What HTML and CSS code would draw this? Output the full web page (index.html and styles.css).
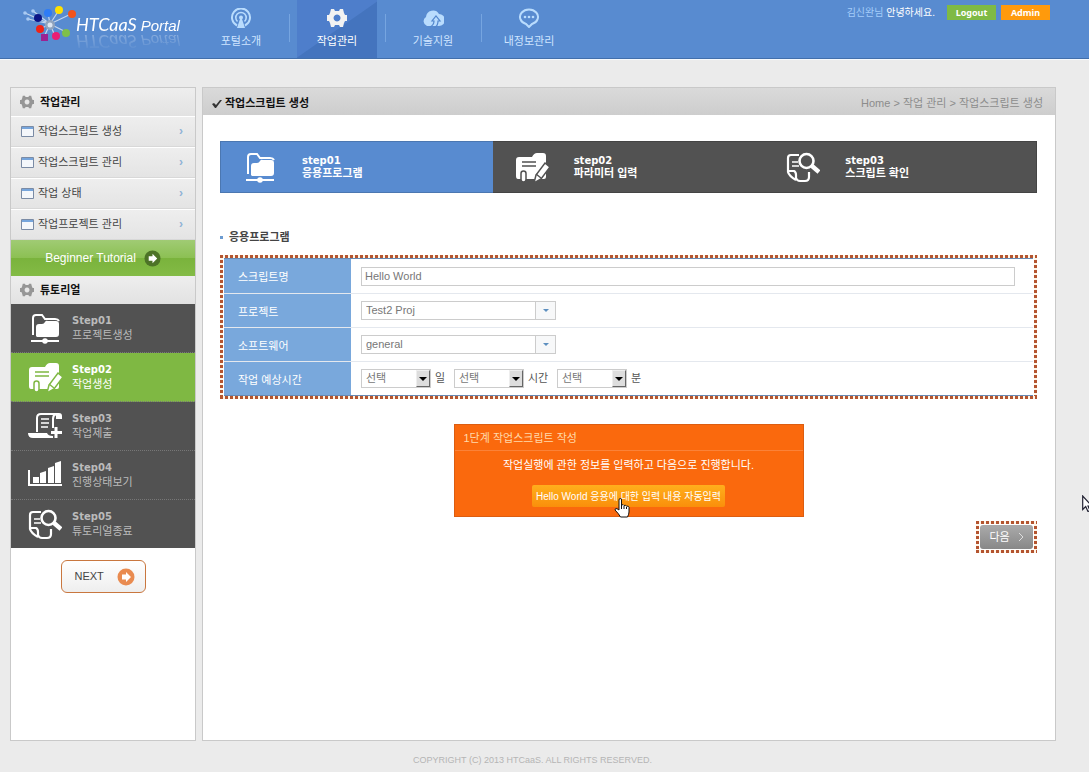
FILE: index.html
```html
<!DOCTYPE html>
<html lang="ko">
<head>
<meta charset="utf-8">
<title>HTCaaS Portal</title>
<link rel="stylesheet" href="styles.css">
</head>
<body>
<svg class="defs" aria-hidden="true">
  <symbol id="i-folder" viewBox="0 0 32 32">
    <path d="M4 23V6q0-3 3-3h6l3 4h10q3 0 4 2" fill="none" stroke="currentColor" stroke-width="2"/>
    <path d="M7 24V15q0-3 3-3h3q2 0 3-2t3-1h8q3 0 3 3v10q0 3-3 3H8z" fill="currentColor"/>
    <path d="M2 29h28" stroke="currentColor" stroke-width="2"/>
    <circle cx="16" cy="29" r="2.800" fill="currentColor"/>
  </symbol>
  <symbol id="i-write" viewBox="0 0 34 32">
    <path d="M1 25V9q0-3 3-3h13q2-4 5-4h6q3 0 3 3v21q0 2-2 2H3q-2 0-2-3z" fill="currentColor"/>
    <path d="M7 11h14M7 15h14" class="cut" stroke-width="1.500"/>
    <rect x="6" y="20" width="5" height="11" rx="2.500" fill="currentColor" class="cut" stroke-width="1.500"/>
    <path d="M19 32l2-8 9-12 5 4-9 12z" fill="currentColor" class="cut" stroke-width="1.500"/>
    <path d="M21 23l5 4" class="cut" stroke-width="1.500"/>
  </symbol>
  <symbol id="i-submit" viewBox="0 0 34 32">
    <path d="M9 22V8q0-4 4-4h15q-3 1-3 5v9" fill="none" stroke="currentColor" stroke-width="2"/>
    <path d="M26 3h5q3 0 3 3v3h-6V5zM0 23h19q1 3 6 3v2H5q-5 0-5-5z" fill="currentColor"/>
    <path d="M13 9h8M13 13h8M13 17h7" stroke="currentColor" stroke-width="1.500"/>
    <path d="M28 17v11M23 22.500h11" stroke="currentColor" stroke-width="3"/>
  </symbol>
  <symbol id="i-chart" viewBox="0 0 34 32">
    <path d="M1 11v15h33" fill="none" stroke="currentColor" stroke-width="2"/>
    <path d="M5 18h6v6H5zM12 14l6-2v12h-6zM20 9l6-2v17h-6zM27 4l6-2v22h-6z" fill="currentColor"/>
  </symbol>
  <symbol id="i-search" viewBox="0 0 34 32">
    <path d="M13 4H5Q2 4 2 7v14q1 4 8 8M2 20h6q2 1 2 4v3q1 3 4 3h5q4 0 4-4v-5" fill="none" stroke="currentColor" stroke-width="2.200"/>
    <path d="M6 11h6M6 15h7" stroke="currentColor" stroke-width="1.500"/>
    <circle cx="20.500" cy="10" r="7" fill="none" stroke="currentColor" stroke-width="2.600"/>
    <path d="M26 15l7 6" stroke="currentColor" stroke-width="4.500"/>
  </symbol>
  <symbol id="i-gear" viewBox="0 0 20 20">
    <path fill-rule="evenodd" fill="currentColor" d="M4 1h3l1 2h4l1-2h3l1 4 1 2h2v6h-2l-1 2-1 4h-3l-1-2H8l-1 2H4l-1-4-1-2H0V7h2l1-2zM10 6.500a3.500 3.500 0 1 0 .1 0z"/>
  </symbol>
  <symbol id="i-arrow" viewBox="0 0 18 18">
    <circle cx="9" cy="9" r="8.500" fill="currentColor"/>
    <path d="M5 6.500h4V4l5 5-5 5v-2.500H5z" fill="#fff"/>
  </symbol>
  <symbol id="i-window" viewBox="0 0 13 11">
    <path d="M.5.500h12v10H.5z" fill="#f4f7fb" stroke="#7a8ba5"/>
    <path d="M1 1h11v2H1z" fill="#76a5dc"/>
  </symbol>
</svg>

<header class="top">
  <a class="logo" href="#" aria-label="HTCaaS Portal">
    <svg class="logo-mark" viewBox="0 0 56 40" aria-hidden="true">
      <g stroke="#c4d6ee" stroke-width="1.200">
        <path d="M28 21L3 10M28 21L11 8M28 21L6 16M28 21L26 10M28 21L37 7M28 21L49 11M28 21L44 29M28 21L33 33M28 21L22 34M28 21L18 26"/>
      </g>
      <circle cx="28" cy="22" r="5" fill="#90a3bd"/><circle cx="28" cy="22" r="2.500" fill="#dde6f2"/>
      <circle cx="3" cy="10" r="1.800" fill="#a9caf3"/><circle cx="11" cy="8" r="1.800" fill="#a9caf3"/><circle cx="6" cy="16" r="1.800" fill="#a9caf3"/>
      <circle cx="16" cy="15" r="4" fill="#0b1586"/><circle cx="26" cy="10" r="4" fill="#2e7cf6"/>
      <circle cx="37" cy="7" r="4" fill="#ffe100"/><circle cx="50" cy="11" r="4" fill="#f1531c"/>
      <circle cx="44" cy="30" r="4" fill="#7fc04b"/><circle cx="34" cy="33" r="4" fill="#e91e73"/>
      <circle cx="18" cy="26" r="4" fill="#f02315"/><path d="M19 31h7v7h-7z" fill="#9c2292"/>
    </svg>
    <span class="logo-text"><span class="logo-name">HTCaaS</span><span class="logo-sub">Portal</span></span>
  </a>
  <nav class="menu">
    <a href="#"><svg viewBox="0 0 20 20" aria-hidden="true"><g fill="none" stroke="currentColor"><path d="M6 17.500a9 9 0 1 1 8 0" stroke-width="2"/><path d="M6.500 13.500a5.200 5.200 0 1 1 7 0" stroke-width="1.600"/></g><circle cx="10" cy="9.500" r="2" fill="currentColor"/><path d="M9 11h2l3 9H6z" fill="currentColor"/></svg><span>포털소개</span></a>
    <a class="on" href="#"><svg aria-hidden="true"><use href="#i-gear"/></svg><span>작업관리</span></a>
    <a href="#"><svg viewBox="0 0 22 20" aria-hidden="true"><path d="M5 18a5 5 0 0 1-1-9 7 7 0 0 1 13-3 6 6 0 0 1 0 12z" fill="currentColor"/><path d="M8 19q4-2 4-6h-2l4-5 4 5h-2q0 5-4 7" fill="none" stroke="#5387cd" stroke-width="1.200"/></svg><span>기술지원</span></a>
    <a href="#"><svg viewBox="0 0 20 20" aria-hidden="true"><path d="M7 16a9 7.500 0 1 1 6 0l-3 3z" fill="none" stroke="currentColor" stroke-width="2"/><g fill="currentColor"><circle cx="6" cy="9" r="1.300"/><circle cx="10" cy="9" r="1.300"/><circle cx="14" cy="9" r="1.300"/></g></svg><span>내정보관리</span></a>
  </nav>
  <div class="user">
    <span class="hello"><span class="who">김신완님</span> 안녕하세요.</span>
    <button class="pill green" type="button">Logout</button>
    <button class="pill amber" type="button">Admin</button>
  </div>
</header>

<div class="layout">
  <aside class="side">
    <h2 class="side-head"><svg aria-hidden="true"><use href="#i-gear"/></svg>작업관리</h2>
    <nav class="side-nav">
      <a href="#"><svg aria-hidden="true"><use href="#i-window"/></svg><span>작업스크립트 생성</span><b>›</b></a>
      <a href="#"><svg aria-hidden="true"><use href="#i-window"/></svg><span>작업스크립트 관리</span><b>›</b></a>
      <a href="#"><svg aria-hidden="true"><use href="#i-window"/></svg><span>작업 상태</span><b>›</b></a>
      <a href="#"><svg aria-hidden="true"><use href="#i-window"/></svg><span>작업프로젝트 관리</span><b>›</b></a>
    </nav>
    <a class="beginner" href="#">Beginner Tutorial<svg aria-hidden="true"><use href="#i-arrow"/></svg></a>
    <h2 class="side-head"><svg aria-hidden="true"><use href="#i-gear"/></svg>튜토리얼</h2>
    <nav class="tutorial">
      <a href="#"><svg aria-hidden="true"><use href="#i-folder"/></svg><span><b>Step01</b>프로젝트생성</span></a>
      <a class="on" href="#"><svg aria-hidden="true"><use href="#i-write"/></svg><span><b>Step02</b>작업생성</span></a>
      <a href="#"><svg aria-hidden="true"><use href="#i-submit"/></svg><span><b>Step03</b>작업제출</span></a>
      <a href="#"><svg aria-hidden="true"><use href="#i-chart"/></svg><span><b>Step04</b>진행상태보기</span></a>
      <a href="#"><svg aria-hidden="true"><use href="#i-search"/></svg><span><b>Step05</b>튜토리얼종료</span></a>
    </nav>
    <button class="next" type="button">NEXT<svg aria-hidden="true"><use href="#i-arrow"/></svg></button>
  </aside>

  <main class="main">
    <div class="main-head">
      <h1><svg viewBox="0 0 10 10" aria-hidden="true"><path d="M0 5l2-1 2 2 4-5h2L4 9H3z" fill="#333"/></svg>작업스크립트 생성</h1>
      <p class="crumbs">Home &gt; 작업 관리 &gt; 작업스크립트 생성</p>
    </div>
    <div class="content">
      <ol class="steps">
        <li class="on"><svg aria-hidden="true"><use href="#i-folder"/></svg><span><b>step01</b>응용프로그램</span></li>
        <li><svg aria-hidden="true"><use href="#i-write"/></svg><span><b>step02</b>파라미터 입력</span></li>
        <li><svg aria-hidden="true"><use href="#i-search"/></svg><span><b>step03</b>스크립트 확인</span></li>
      </ol>
      <h2 class="section">응용프로그램</h2>
      <form class="dotted form">
        <div class="rows">
          <div class="row"><label for="name">스크립트명</label><div class="field"><input id="name" type="text" value="Hello World"></div></div>
          <div class="row"><label for="proj">프로젝트</label><div class="field"><span class="combo"><select id="proj"><option>Test2 Proj</option></select><i></i></span></div></div>
          <div class="row"><label for="soft">소프트웨어</label><div class="field"><span class="combo"><select id="soft"><option>general</option></select><i></i></span></div></div>
          <div class="row"><label for="day">작업 예상시간</label><div class="field times">
            <span class="combo classic"><select id="day"><option>선택</option></select><i></i></span><label for="day">일</label>
            <span class="combo classic"><select id="hour"><option>선택</option></select><i></i></span><label for="hour">시간</label>
            <span class="combo classic"><select id="min"><option>선택</option></select><i></i></span><label for="min">분</label>
          </div></div>
        </div>
      </form>
      <section class="guide">
        <h3>1단계 작업스크립트 작성</h3>
        <p>작업실행에 관한 정보를 입력하고 다음으로 진행합니다.</p>
        <button type="button">Hello World 응용에 대한 입력 내용 자동입력</button>
        <svg class="hand" viewBox="0 0 16 20" aria-hidden="true"><path d="M5 12V2q0-1.500 1.300-1.500T7.500 2v5q2-1 2.500.500 2-.8 2.500.700 2-.5 2.500 1V14q0 2-1.500 5h-7Q5 16 1 12q0-2 2-1.300z" fill="#fff" stroke="#111"/><path d="M7.500 7v4M10 8v3M12.500 9v2" stroke="#111" fill="none"/></svg>
      </section>
      <div class="dotted go"><button type="button">다음<svg viewBox="0 0 6 10" aria-hidden="true"><path d="M1 1l4 4-4 4" fill="none" stroke="#ddd"/></svg></button></div>
    </div>
  </main>
</div>
<footer class="foot">COPYRIGHT (C) 2013 HTCaaS. ALL RIGHTS RESERVED.</footer>
<svg class="pointer" viewBox="0 0 7 17" aria-hidden="true"><path d="M.7 1v13.500l3-3 2.300 5 2-1-2-4.500h4z" fill="#fff" stroke="#223" stroke-width="1.200"/></svg>
</body>
</html>
```

FILE: styles.css
```css
* { box-sizing: border-box; }
body {
  position: relative;
  display: flex;
  flex-direction: column;
  min-height: 100vh;
  margin: 0;
  overflow-x: hidden;
  background: #ebebeb;
  color: #444;
  font: 11px/15px "Liberation Sans", "Noto Sans CJK KR", sans-serif;
}
h1, h2, h3, p, ol { margin: 0; padding: 0; font-size: 11px; }
a { color: inherit; text-decoration: none; }
button, input, select { font: inherit; color: inherit; }
button { border: 0; padding: 0; cursor: pointer; }
svg { display: block; flex: none; }
.defs { position: absolute; width: 0; height: 0; }

.top {
  display: flex;
  height: 59px;
  background: #588bd0;
  border-bottom: 1px solid #426fab;
  box-shadow: 0 1px 0 #f5f9fd;
  color: #cfe5ff;
}
.logo { display: flex; width: 193px; padding: 3px 0 0 22px; color: #fff; }
.logo-mark { width: 56px; height: 40px; }
.logo-text {
  display: flex;
  align-items: baseline;
  gap: 4px;
  height: 18px;
  margin: 12px 0 0 -2px;
  line-height: 18px;
  font-style: italic;
  -webkit-box-reflect: below 0 linear-gradient(transparent, rgba(0, 0, 0, .3));
}
.logo-name { font-family: Lato, sans-serif; font-size: 18px; }
.logo-sub { font-size: 15px; }
.menu { display: flex; }
.menu a {
  display: flex;
  flex-direction: column;
  align-items: center;
  gap: 5px;
  width: 96px;
  padding-top: 8px;
}
.menu a + a { background: linear-gradient(#76a5e0, #76a5e0) 0 14px / 1px 28px no-repeat; }
.menu svg { width: 22px; height: 20px; color: #b9dcfd; }
.menu span { line-height: 16px; }
.menu a.on {
  color: #fff;
  background:
    linear-gradient(#76a5e0, #76a5e0) 0 14px / 1px 28px no-repeat,
    linear-gradient(145deg, #4e7ecb 50%, #4474be 51%) 8px 0 / 80px 100% no-repeat;
}
.menu .on svg { color: #f2f2f2; }
.user { display: flex; gap: 5px; margin-left: auto; padding: 5px 39px 0 0; }
.hello { margin-right: 7px; color: #fff; font-size: 10px; }
.who { color: #a4cdfa; }
.pill { width: 49px; height: 15px; color: #fff; font: bold 9px/15px "Noto Sans", sans-serif; }
.green { background: #7fba45; }
.amber { background: #ff9a0c; }

.layout {
  flex: 1;
  display: grid;
  grid-template-columns: 186px minmax(0, 1fr);
  gap: 6px;
  padding: 28px 33px 0 10px;
}
.side, .main { background: #fff; border: 1px solid #c9c9c9; }
.side-head {
  display: flex;
  align-items: center;
  gap: 6px;
  height: 28px;
  padding-left: 9px;
  background: linear-gradient(#eee, #e2e2e2);
  color: #111;
}
.side-head svg { width: 14px; height: 14px; color: #969696; }
.side-nav a {
  display: flex;
  align-items: center;
  gap: 4px;
  height: 31px;
  padding: 0 12px 0 10px;
  background: linear-gradient(#eee, #e4e4e4);
  border-top: 1px solid #fff;
  border-bottom: 1px solid #d8d8d8;
}
.side-nav svg { width: 13px; height: 11px; }
.side-nav b { margin-left: auto; color: #8fb2d6; font-size: 12px; }
.beginner {
  display: flex;
  align-items: center;
  justify-content: center;
  gap: 8px;
  height: 36px;
  background: linear-gradient(#a0cb74, #8cc053 50%, #7ab33c 51%, #83bb46);
  color: #fff;
  font-size: 12px;
}
.beginner svg { width: 17px; height: 17px; color: #4d7327; }
.tutorial a {
  --icon-bg: #525252;
  display: flex;
  align-items: center;
  gap: 10px;
  height: 49px;
  padding-left: 17px;
  background: #525252;
  border-bottom: 1px dotted #777;
  color: #bbb;
}
.tutorial a:last-child { height: 48px; border-bottom: 0; }
.tutorial svg { width: 34px; height: 32px; color: #fff; }
.tutorial span, .steps span { display: flex; flex-direction: column; }
.tutorial b, .steps b { font-family: "DejaVu Sans", sans-serif; font-size: 10px; }
.tutorial .on { --icon-bg: #7fb843; background: #7fb843; color: #fff; }
.cut { stroke: var(--icon-bg); }
.next {
  display: flex;
  align-items: center;
  justify-content: space-between;
  width: 85px;
  height: 33px;
  margin: 12px auto 0;
  padding: 0 10px 0 13px;
  background: linear-gradient(#fff, #eee);
  border: 1px solid #c9773f;
  border-radius: 6px;
}
.next svg { width: 18px; height: 18px; color: #e98b50; }

.main-head {
  display: flex;
  align-items: center;
  justify-content: space-between;
  height: 27px;
  padding: 4px 12px 0 9px;
  background: linear-gradient(#dadada, #cdcdcd);
}
.main-head h1 { display: flex; align-items: center; gap: 3px; color: #111; }
.main-head h1 svg { width: 10px; height: 10px; }
.crumbs { color: #8c8c8c; }
.content { display: flex; flex-direction: column; padding: 26px 18px 24px 17px; }
.steps {
  --icon-bg: #525252;
  display: grid;
  grid-template-columns: repeat(3, 1fr);
  height: 52px;
  background: #525252;
  border: 1px solid #444;
  list-style: none;
  color: #fff;
}
.steps li { display: flex; align-items: center; gap: 25px; padding-left: 22px; line-height: 13px; font-weight: bold; }
.steps .on { margin: -1px 0 -1px -1px; background: #588bd0; border: 1px solid #4b77b1; border-right: 0; }
.steps svg { width: 34px; height: 32px; }
.section { display: flex; align-items: center; gap: 6px; margin: 37px 0 10px; }
.section::before { content: ""; width: 3px; height: 3px; background: #6c9bd0; }

.dotted {
  --h: repeating-linear-gradient(90deg, #b4542f 0 3px, #fff5e6 3px 5px);
  --v: repeating-linear-gradient(#b4542f 0 3px, #fff5e6 3px 5px);
  background:
    var(--h) top / 100% 3px no-repeat,
    var(--h) bottom / 100% 3px no-repeat,
    var(--v) left / 3px 100% no-repeat,
    var(--v) right / 3px 100% no-repeat;
}
.form { padding: 3px 4px; }
.rows { border-top: 1px solid #6789b3; border-bottom: 1px solid #6789b3; }
.row { display: grid; grid-template-columns: 127px minmax(0, 1fr); min-height: 34px; }
.row + .row { border-top: 1px solid #e4e8ee; }
.row > label {
  display: flex;
  align-items: center;
  padding: 3px 0 0 14px;
  background: #79a8dc;
  color: #fff;
}
.field { display: flex; align-items: center; padding: 0 18px 0 10px; color: #777; }
.field input {
  width: 100%;
  height: 19px;
  padding: 0 3px;
  background: #fff;
  border: 1px solid #ccc;
  border-radius: 0;
}
.combo { display: grid; grid-template-columns: 1fr 21px; width: 195px; height: 19px; }
.combo select {
  grid-area: 1 / 1 / 2 / 3;
  appearance: none;
  padding: 0 4px;
  background: #fff;
  border: 1px solid #ccc;
  border-radius: 0;
}
.combo i {
  display: grid;
  place-items: center;
  grid-area: 1 / 2;
  margin: 1px 1px 1px 0;
  background: #f7f8f9;
  border-left: 1px solid #ccc;
  pointer-events: none;
}
.combo i::before { content: ""; border: 3px solid transparent; border-top-color: #5d8fc0; border-bottom: 0; }
.classic { grid-template-columns: 1fr 15px; width: 70px; }
.classic i { background: #ddd; border: 1px solid; border-color: #eee #666 #666 #eee; }
.classic i::before { border-width: 4px 4px 0; border-top-color: #000; }
.times label { width: 23px; padding-left: 4px; color: #555; white-space: nowrap; }
.times label[for="hour"] { width: 33px; }

.guide {
  position: relative;
  display: flex;
  flex-direction: column;
  align-items: center;
  align-self: center;
  width: 350px;
  margin-top: 25px;
  padding-bottom: 9px;
  background: #fa690d;
  border: 1px solid #dc5d10;
  color: #fff;
}
.guide h3 {
  align-self: stretch;
  padding: 6px 9px 4px;
  border-bottom: 1px solid #fb8238;
  color: #ffd9ab;
  font-weight: normal;
}
.guide p { margin: 7px 0 12px; }
.guide button {
  height: 22px;
  padding: 0 4px;
  background: linear-gradient(#ffae1c, #fa8f0b);
  border-radius: 2px;
  font-size: 10px;
}
.hand { position: absolute; left: 159px; top: 73px; width: 16px; height: 20px; }
.go { align-self: flex-end; margin-top: 4px; padding: 4px; }
.go button {
  display: flex;
  align-items: center;
  justify-content: center;
  gap: 8px;
  width: 53px;
  height: 24px;
  background: linear-gradient(#aaa, #888);
  border-radius: 3px;
  color: #fff;
}
.go svg { width: 6px; height: 10px; }
.foot { height: 31px; padding: 4px 24px 0 0; text-align: center; color: #b5b5b5; font-size: 9px; line-height: 31px; }
.pointer { position: absolute; right: 0; top: 495px; width: 7px; height: 17px; }
```
